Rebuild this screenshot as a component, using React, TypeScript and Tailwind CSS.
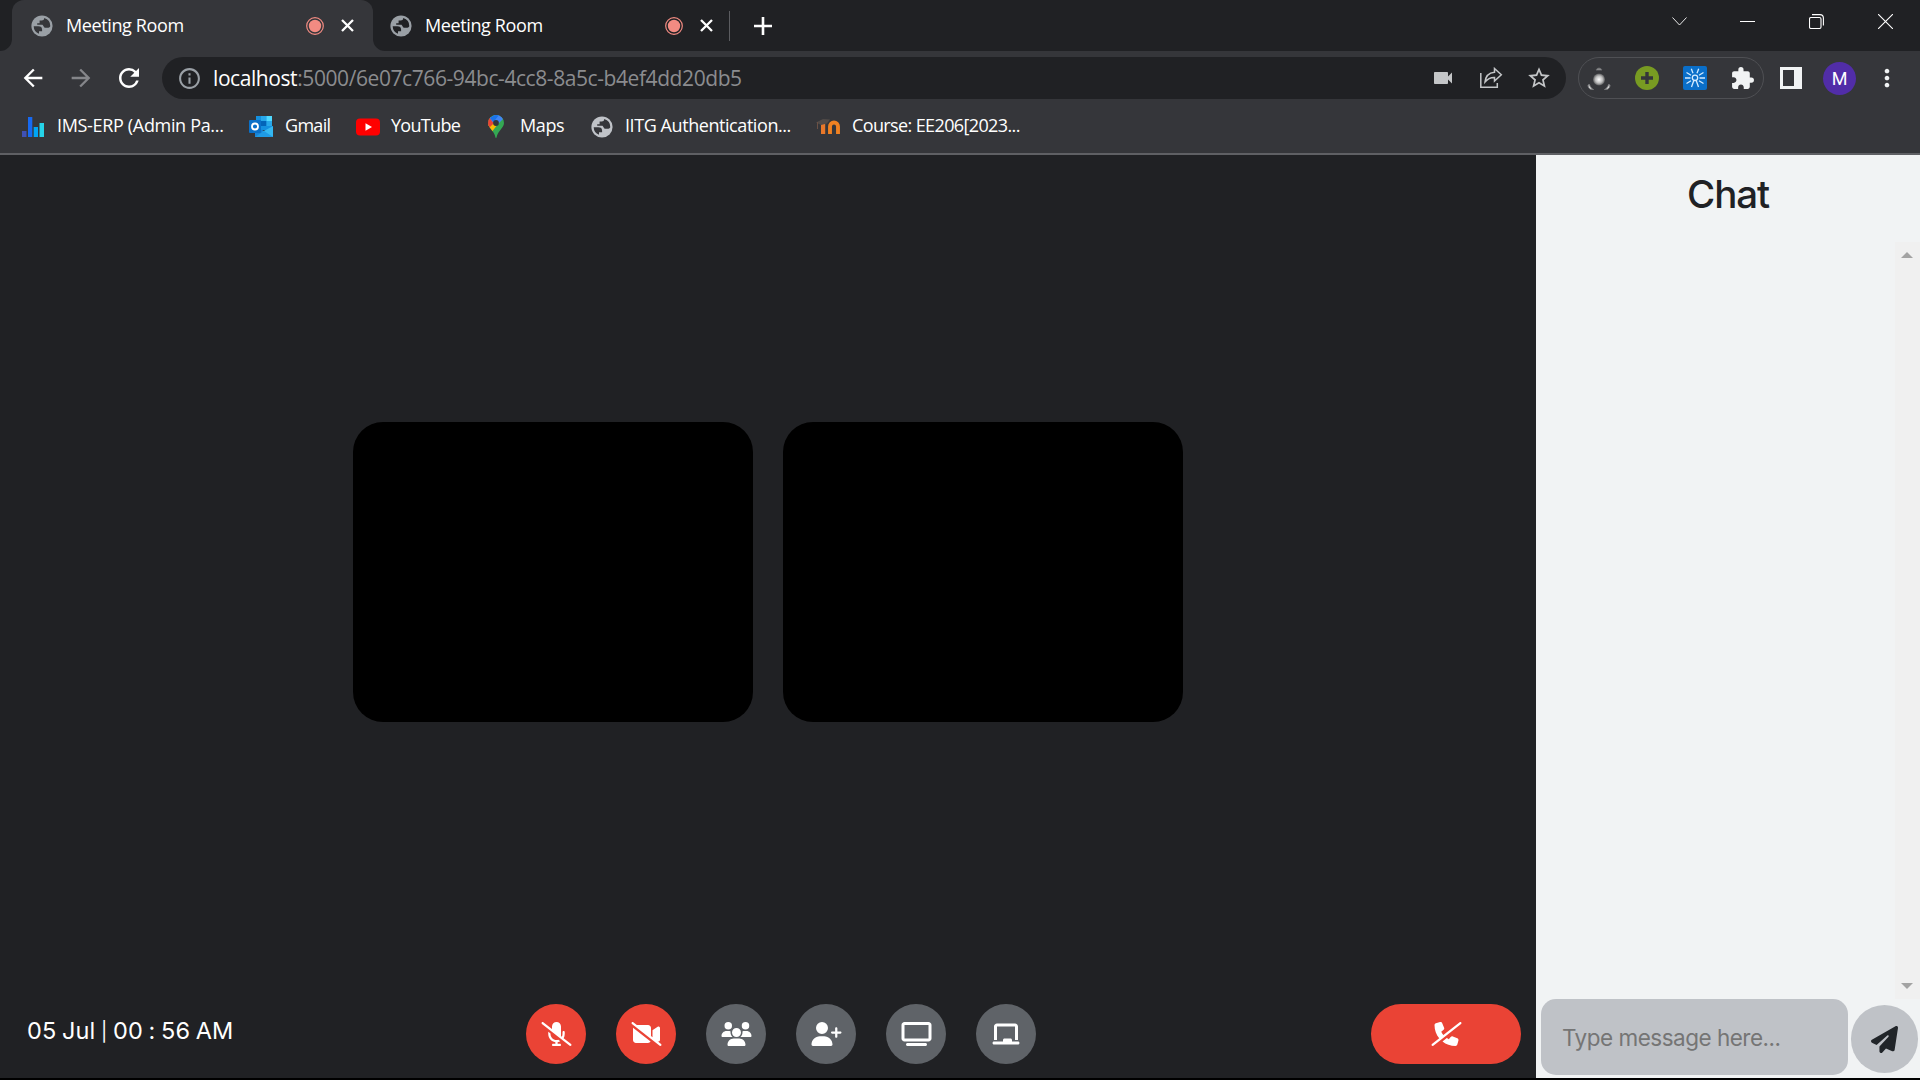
import React from "react";
import {
  FaMicrophoneSlash,
  FaVideoSlash,
  FaUsers,
  FaUserPlus,
  FaTv,
  FaChalkboard,
  FaPhoneSlash,
  FaPaperPlane,
} from "react-icons/fa6";
import {
  MdArrowBack,
  MdArrowForward,
  MdRefresh,
  MdInfoOutline,
  MdVideocam,
  MdStarBorder,
  MdExtension,
  MdMoreVert,
} from "react-icons/md";

function Globe({ color, bg }: { color: string; bg: string }) {
  return (
    <svg width="22" height="22" viewBox="0 0 22 22" className="shrink-0">
      <circle cx="11" cy="11" r="10.6" fill={color} />
      <path
        d="M2.700 11.200H7.300C9.900 11.200 11.100 12.300 11.100 14.700V16.200H8V18.800A8.400 8.400 0 0 1 2.700 11.200Z"
        fill={bg}
      />
      <path
        d="M13.200 2.900C13.200 4.600 12.300 5.400 10.600 5.400H8.600V8.300H6.200V9.700H11C12.500 9.700 12.500 12.600 14.300 12.800H16.500C17.800 12.800 18.600 12.200 19.300 11.200A8.400 8.400 0 0 0 13.200 2.900Z"
        fill={bg}
      />
    </svg>
  );
}

function Recording() {
  return (
    <svg width="18" height="18" viewBox="0 0 18 18" className="shrink-0">
      <circle cx="9" cy="9" r="8.300" fill="none" stroke="#f28b82" strokeWidth="1.200" />
      <circle cx="9" cy="9" r="6.200" fill="#f28b82" />
    </svg>
  );
}

function Tab({ active }: { active?: boolean }) {
  return (
    <div
      className={
        active
          ? "relative flex h-[51px] w-[361px] items-center rounded-t-[12px] bg-[#35363a] pl-[19px]"
          : "relative flex h-[51px] w-[358px] items-center pl-[17px]"
      }
    >
      {active && (
        <>
          <svg className="absolute bottom-0 -left-3" width="12" height="12">
            <path d="M12 0V12H0A12 12 0 0 0 12 0Z" fill="#35363a" />
          </svg>
          <svg className="absolute -right-3 bottom-0" width="12" height="12">
            <path d="M0 0V12H12A12 12 0 0 1 0 0Z" fill="#35363a" />
          </svg>
        </>
      )}
      <Globe color="#9aa0a6" bg={active ? "#35363a" : "#202124"} />
      <span className="ml-[13px] w-[240px] shrink-0 text-[18px] tracking-[-0.38px] whitespace-nowrap text-white">Meeting Room</span>
      <Recording />
      <svg className="ml-[17px] shrink-0" width="13" height="13" stroke="#fff" strokeWidth="2.300">
        <path d="M1 1L12 12M12 1L1 12" />
      </svg>
    </div>
  );
}

function Bars() {
  return (
    <svg width="22" height="20" viewBox="0 0 22 20">
      <rect x="0" y="14" width="4.500" height="6" fill="#3f51b5" />
      <rect x="6" y="0" width="4.300" height="20" fill="#1769f0" />
      <rect x="11.700" y="10" width="4.300" height="10" fill="#00a5f5" />
      <rect x="17.500" y="6" width="4.500" height="14" fill="#26d4e8" />
    </svg>
  );
}

function Outlook() {
  return (
    <svg width="24" height="21" viewBox="0 0 24 21">
      <rect x="7" y="0" width="16" height="14" fill="#1490df" />
      <rect x="12" y="0" width="5.500" height="5" fill="#28a8ea" />
      <rect x="17.500" y="0" width="5.500" height="5" fill="#50d9ff" />
      <rect x="12" y="5" width="5.500" height="5" fill="#0364b8" />
      <rect x="17.500" y="5" width="5.500" height="5" fill="#28a8ea" />
      <path d="M6 10L15 15L24 10V21H6Z" fill="#1784d9" />
      <path d="M24 10L13 16L24 21Z" fill="#35b8f1" />
      <path d="M6 21L15 15L24 21Z" fill="#1f9be5" />
      <rect x="0" y="4" width="12" height="13" rx="1" fill="#0a70c8" />
      <circle cx="6" cy="10.500" r="3" fill="none" stroke="#fff" strokeWidth="1.800" />
    </svg>
  );
}

function YouTube() {
  return (
    <svg width="24" height="18" viewBox="0 0 24 18">
      <rect y="0.500" width="24" height="17" rx="4" fill="#f00" />
      <path d="M9.500 5.300L16 9L9.500 12.700Z" fill="#fff" />
    </svg>
  );
}

function Pin() {
  return (
    <svg width="16" height="23" viewBox="0 0 16 23">
      <defs>
        <clipPath id="pin">
          <path d="M8 0A8 8 0 0 0 0 8C0 11 2 12.800 4 15.500C6 18 7 20 7.300 22C7.500 23.200 8.500 23.200 8.700 22C9 20 10 18 12 15.500C14 12.800 16 11 16 8A8 8 0 0 0 8 0Z" />
        </clipPath>
      </defs>
      <g clipPath="url(#pin)">
        <rect width="16" height="23" fill="#34a853" />
        <path d="M0 15V10L8 1L13 5L3 18Z" fill="#fbbc04" />
        <path d="M0 11V3L2 2L7 7L1 13Z" fill="#ea4335" />
        <path d="M1.500 3L8 -1H16V3L8 11Z" fill="#4285f4" />
        <path d="M2 3L8 -1L11 0L5.500 7Z" fill="#1a73e8" />
        <circle cx="8" cy="8" r="2.900" fill="#35363a" />
      </g>
    </svg>
  );
}

function Moodle() {
  return (
    <svg width="24" height="17" viewBox="0 0 24 17">
      <rect x="5" y="6" width="4.200" height="10" fill="#e8782a" />
      <path d="M14 16V8.500A4 4 0 0 1 22 8.500V16" fill="none" stroke="#ef8122" strokeWidth="3.900" />
      <path d="M0 4.500L7 1L14 1.500L11 5.500L5 7Z" fill="#514b48" />
      <path d="M1.500 4V11" stroke="#6b5145" strokeWidth="1" />
    </svg>
  );
}

function Share() {
  return (
    <svg width="24" height="22" viewBox="0 0 24 22" fill="none" stroke="#c4c6c8" strokeWidth="1.500">
      <path d="M1.800 6V20.300H18.300V16" />
      <path d="M15.500 1.500L22.300 7.800L15.500 14V10.500C11 10.300 8.500 12 6 15C6.500 9.500 9.500 5.800 15.500 5.200Z" strokeLinejoin="miter" />
    </svg>
  );
}

function Molecule() {
  return (
    <svg width="24" height="24" viewBox="0 0 24 24">
      <defs>
        <radialGradient id="ball">
          <stop offset="0" stopColor="#fff" />
          <stop offset="0.600" stopColor="#bbb" />
          <stop offset="1" stopColor="#5a5b5d" />
        </radialGradient>
      </defs>
      <circle cx="12" cy="13.500" r="6" fill="url(#ball)" />
      <path d="M9 4A3.300 3.300 0 0 1 15 4Z" fill="#a9a9a9" stroke="#66676a" />
      <path d="M1 19C1 22 3 24 6.500 23.500C4.500 22.500 3 21 2.500 18.500Z" fill="#ddd" stroke="#77787a" />
      <path d="M23 19C23 22 21 24 17.500 23.500C19.500 22.500 21 21 21.500 18.500Z" fill="#ddd" stroke="#77787a" />
    </svg>
  );
}

function Sunburst() {
  return (
    <svg width="24" height="24" viewBox="0 0 24 24">
      <rect width="24" height="24" rx="2" fill="#0a6fc9" />
      <g stroke="#d5ecff" strokeWidth="1.300" fill="none">
        <circle cx="12" cy="11.800" r="2.700" />
        <path d="M2 12H7.500M16.500 12H22M8.300 2.800L10 7.300M15.700 2.800L14 7.300M3.500 6.500L8 9.300M20.500 6.500L16 9.300M3.500 17.500L8 14.700M20.500 17.500L16 14.700M10.800 14.500L8.500 21M13.200 14.500L15.500 21" />
      </g>
    </svg>
  );
}

function Bookmark({ className, children, icon }: { className: string; children: React.ReactNode; icon: React.ReactNode }) {
  return (
    <div className={"flex shrink-0 items-center whitespace-nowrap " + className}>
      {icon}
      <span className="pb-[2px]">{children}</span>
    </div>
  );
}

function Round({ red, children }: { red?: boolean; children: React.ReactNode }) {
  return (
    <button
      className={
        "flex size-[60px] items-center justify-center rounded-full text-[24px] text-white " +
        (red ? "bg-[#ea4335]" : "bg-[#5f6368]")
      }
    >
      {children}
    </button>
  );
}

export default function App() {
  return (
    <div className="flex h-[1080px] w-[1920px] flex-col overflow-hidden bg-black font-['Open_Sans',sans-serif]">
      <header className="flex h-[51px] shrink-0 items-center bg-[#202124] pl-3">
        <Tab active />
        <Tab />
        <div className="-ml-[2px] h-[30px] w-px bg-[#5b5c60]" />
        <svg className="ml-[24px]" width="18" height="18" stroke="#fff" strokeWidth="2.600">
          <path d="M9 0V18M0 9H18" />
        </svg>
        <div className="mb-[8px] ml-auto flex items-center pr-[27px]">
          <svg width="15" height="9" fill="none" stroke="#fff" strokeWidth="0.900">
            <path d="M0.500 0.500L7.500 8L14.500 0.500" />
          </svg>
          <div className="ml-[53px] h-px w-[15px] bg-white" />
          <svg className="ml-[54px]" width="15" height="15" fill="none" stroke="#fff" strokeWidth="1.100">
            <rect x="0.500" y="3.500" width="11.500" height="11" rx="1.500" />
            <path d="M3 0.600H11A3.500 3.500 0 0 1 14.400 4V11.500" />
          </svg>
          <svg className="ml-[54px]" width="15" height="15" stroke="#fff" strokeWidth="1.100">
            <path d="M0 0L15 15M15 0L0 15" />
          </svg>
        </div>
      </header>

      <div className="flex h-[54px] shrink-0 items-center bg-[#35363a] pl-[19px]">
        <MdArrowBack className="size-[28px] text-white" />
        <MdArrowForward className="ml-[20px] size-[28px] text-[#85868a]" />
        <MdRefresh className="ml-[19px] size-[30px] text-white" />
        <div className="ml-[18px] flex h-[42px] w-[1404px] shrink-0 items-center rounded-full bg-[#202124] pl-[15px]">
          <MdInfoOutline className="size-[25px] text-[#9aa0a6]" />
          <div className="ml-[11px] pt-[2px] text-[21px] tracking-[-0.42px] whitespace-nowrap text-[#8b8c8f]">
            <span className="text-white">localhost</span>:5000/6e07c766-94bc-4cc8-8a5c-b4ef4dd20db5
          </div>
          <div className="ml-auto flex items-center pr-[14px]">
            <MdVideocam className="size-6 text-[#c4c6c8]" />
            <div className="ml-[24px]"><Share /></div>
            <MdStarBorder className="ml-[23px] size-[26px] text-[#c4c6c8]" />
          </div>
        </div>
        <div className="ml-3 flex h-[42px] w-[186px] shrink-0 items-center rounded-full border border-[#4f5054] pl-[8px]">
          <Molecule />
          <svg className="ml-6" width="24" height="24">
            <circle cx="12" cy="12" r="12" fill="#789b22" />
            <path d="M12 6V18M6 12H18" stroke="#35363a" strokeWidth="3.400" />
          </svg>
          <div className="ml-6"><Sunburst /></div>
          <MdExtension className="ml-[23px] size-[25px] text-[#f1f3f4]" />
        </div>
        <svg className="ml-4 shrink-0" width="22" height="22">
          <path d="M0 0H22V22H0ZM3 3V19H14V3Z" fillRule="evenodd" fill="#f1f3f4" />
        </svg>
        <div className="ml-[21px] flex size-[33px] shrink-0 items-center justify-center rounded-full bg-[#512da8] font-['Roboto',sans-serif] text-[18px] text-white">
          M
        </div>
        <MdMoreVert className="ml-[17px] size-[28px] shrink-0 text-[#f1f3f4]" />
      </div>

      <nav className="flex h-[50px] shrink-0 items-center border-b-2 border-[#5f6064] bg-[#35363a] pb-[5px] pl-[22px] text-[18px] text-white">
        <Bookmark className="w-[227px] gap-[13px] tracking-[-0.33px]" icon={<Bars />}>IMS-ERP (Admin Pa...</Bookmark>
        <Bookmark className="w-[107px] gap-[12px] tracking-[-0.7px]" icon={<Outlook />}>Gmail</Bookmark>
        <Bookmark className="w-[132px] gap-[11px] tracking-[-0.7px]" icon={<YouTube />}>YouTube</Bookmark>
        <Bookmark className="w-[103px] gap-[16px] tracking-[-0.4px]" icon={<Pin />}>Maps</Bookmark>
        <Bookmark className="w-[225px] gap-[12px] tracking-[-0.43px]" icon={<Globe color="#c0c3c8" bg="#35363a" />}>IITG Authentication...</Bookmark>
        <Bookmark className="gap-[12px] tracking-[-0.62px]" icon={<Moodle />}>Course: EE206[2023...</Bookmark>
      </nav>

      <div className="flex h-[923px] shrink-0 font-['Inter',sans-serif]">
        <main className="flex w-[1536px] flex-col bg-[#202124]">
          <section className="flex h-[834px] items-center justify-center gap-[30px]">
            <div className="h-[300px] w-[400px] rounded-[30px] bg-black" />
            <div className="h-[300px] w-[400px] rounded-[30px] bg-black" />
          </section>
          <footer className="flex h-[89px] items-center px-[15px]">
            <div className="w-[511px] pb-[6px] pl-[12px] text-[23.5px] tracking-[0.05px] whitespace-pre text-white [word-spacing:-0.9px]">
              05 Jul <span className="relative -top-px text-[19px]">|</span> 00 : 56 AM
            </div>
            <div className="flex gap-[30px]">
              <Round red><FaMicrophoneSlash className="w-[31px]" /></Round>
              <Round red><FaVideoSlash className="w-[31px]" /></Round>
              <Round><FaUsers className="w-[31px]" /></Round>
              <Round><FaUserPlus className="w-[31px]" /></Round>
              <Round><FaTv className="w-[31px]" /></Round>
              <Round><FaChalkboard className="w-[28px]" /></Round>
            </div>
            <button className="ml-auto flex h-[60px] w-[150px] items-center justify-center rounded-full bg-[#ea4335] text-[24px] text-white">
              <FaPhoneSlash className="w-[31px]" />
            </button>
          </footer>
        </main>

        <aside className="flex w-[384px] flex-col bg-[#f1f3f4]">
          <h1 className="flex h-[87px] justify-center pt-[10px] text-[38.5px] leading-[58px] font-medium tracking-[-1.1px] text-[#202124]">Chat</h1>
          <div className="flex h-[757px] justify-end">
            <div className="flex w-[25px] flex-col items-center justify-between bg-[#f0f0f0] py-[10px] pr-[1px]">
              <svg width="12" height="6"><path d="M0 6L6 0L12 6Z" fill="#a3a3a3" /></svg>
              <svg width="12" height="6"><path d="M0 0L6 6L12 0Z" fill="#a3a3a3" /></svg>
            </div>
          </div>
          <div className="flex h-[79px] gap-[3px] pl-[5px]">
            <input
              className="h-[76px] w-[307px] rounded-[15px] bg-[#bfc2c7] px-[21px] text-[22.5px] tracking-[-0.5px] outline-none placeholder:text-[#757575]"
              placeholder="Type message here..."
            />
            <button className="mt-[6px] flex h-[68px] w-[67px] items-center justify-center rounded-full bg-[#bfc2c7] text-[27px] text-[#212529]">
              <FaPaperPlane />
            </button>
          </div>
        </aside>
      </div>
    </div>
  );
}
